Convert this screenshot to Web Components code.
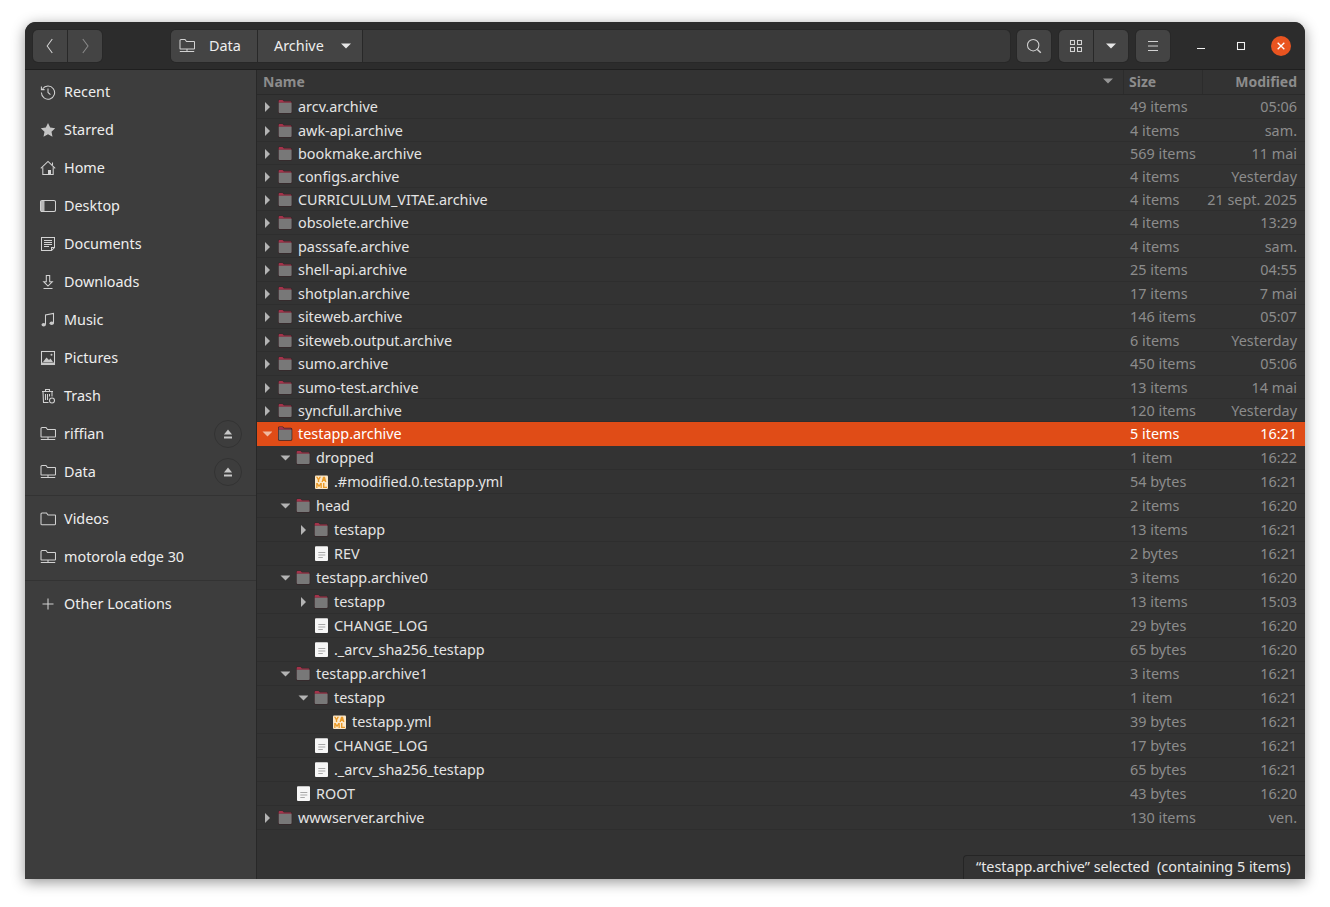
<!doctype html>
<html><head><meta charset="utf-8"><title>Archive</title>
<style>
html,body{margin:0;background:#fff;height:100%;overflow:hidden}
body{padding:22px 0 0 25px;box-sizing:border-box;font:14.4px "Noto Sans","Open Sans",sans-serif;color:#eee}
</style></head><body>
<fm-window>
  <fm-header slot="header"></fm-header>
  <fm-sidebar slot="side">
    <fm-place icon="recent">Recent</fm-place>
    <fm-place icon="star">Starred</fm-place>
    <fm-place icon="home">Home</fm-place>
    <fm-place icon="desktop">Desktop</fm-place>
    <fm-place icon="docs">Documents</fm-place>
    <fm-place icon="down">Downloads</fm-place>
    <fm-place icon="music">Music</fm-place>
    <fm-place icon="pics">Pictures</fm-place>
    <fm-place icon="trash">Trash</fm-place>
    <fm-place icon="drive" eject>riffian</fm-place>
    <fm-place icon="drive" eject>Data</fm-place>
    <fm-sep></fm-sep>
    <fm-place icon="fold">Videos</fm-place>
    <fm-place icon="drive">motorola edge 30</fm-place>
    <fm-sep></fm-sep>
    <fm-place icon="plus">Other Locations</fm-place>
  </fm-sidebar>
  <fm-list slot="main">
    <fm-row h="24" d="0" a="r" i="folder" s="49 items" m="05:06">arcv.archive</fm-row>
    <fm-row h="23" d="0" a="r" i="folder" s="4 items" m="sam.">awk-api.archive</fm-row>
    <fm-row h="23" d="0" a="r" i="folder" s="569 items" m="11 mai">bookmake.archive</fm-row>
    <fm-row h="23" d="0" a="r" i="folder" s="4 items" m="Yesterday">configs.archive</fm-row>
    <fm-row h="23" d="0" a="r" i="folder" s="4 items" m="21 sept. 2025">CURRICULUM_VITAE.archive</fm-row>
    <fm-row h="24" d="0" a="r" i="folder" s="4 items" m="13:29">obsolete.archive</fm-row>
    <fm-row h="23" d="0" a="r" i="folder" s="4 items" m="sam.">passsafe.archive</fm-row>
    <fm-row h="24" d="0" a="r" i="folder" s="25 items" m="04:55">shell-api.archive</fm-row>
    <fm-row h="23" d="0" a="r" i="folder" s="17 items" m="7 mai">shotplan.archive</fm-row>
    <fm-row h="24" d="0" a="r" i="folder" s="146 items" m="05:07">siteweb.archive</fm-row>
    <fm-row h="23" d="0" a="r" i="folder" s="6 items" m="Yesterday">siteweb.output.archive</fm-row>
    <fm-row h="24" d="0" a="r" i="folder" s="450 items" m="05:06">sumo.archive</fm-row>
    <fm-row h="23" d="0" a="r" i="folder" s="13 items" m="14 mai">sumo-test.archive</fm-row>
    <fm-row h="23" d="0" a="r" i="folder" s="120 items" m="Yesterday">syncfull.archive</fm-row>
    <fm-row d="0" a="d" i="folder" s="5 items" m="16:21" sel>testapp.archive</fm-row>
    <fm-row d="1" a="d" i="folder" s="1 item" m="16:22">dropped</fm-row>
    <fm-row d="2" i="yaml" s="54 bytes" m="16:21">.#modified.0.testapp.yml</fm-row>
    <fm-row d="1" a="d" i="folder" s="2 items" m="16:20">head</fm-row>
    <fm-row d="2" a="r" i="folder" s="13 items" m="16:21">testapp</fm-row>
    <fm-row d="2" i="file" s="2 bytes" m="16:21">REV</fm-row>
    <fm-row d="1" a="d" i="folder" s="3 items" m="16:20">testapp.archive0</fm-row>
    <fm-row d="2" a="r" i="folder" s="13 items" m="15:03">testapp</fm-row>
    <fm-row d="2" i="file" s="29 bytes" m="16:20">CHANGE_LOG</fm-row>
    <fm-row d="2" i="file" s="65 bytes" m="16:20">._arcv_sha256_testapp</fm-row>
    <fm-row d="1" a="d" i="folder" s="3 items" m="16:21">testapp.archive1</fm-row>
    <fm-row d="2" a="d" i="folder" s="1 item" m="16:21">testapp</fm-row>
    <fm-row d="3" i="yaml" s="39 bytes" m="16:21">testapp.yml</fm-row>
    <fm-row d="2" i="file" s="17 bytes" m="16:21">CHANGE_LOG</fm-row>
    <fm-row d="2" i="file" s="65 bytes" m="16:21">._arcv_sha256_testapp</fm-row>
    <fm-row d="1" i="file" s="43 bytes" m="16:20">ROOT</fm-row>
    <fm-row d="0" a="r" i="folder" s="130 items" m="ven.">wwwserver.archive</fm-row>
  </fm-list>
</fm-window>
<script>
const ICONS={
 recent:'<path d="M2.600 4.800A6.600 6.600 0 1 1 1.400 8.500" fill="none"/><path d="M8 4.500V8.400l2.400 2.200" fill="none"/><path d="M1.400 2.400v3.200h3.200" fill="none"/>',
 star:'<path d="M8 .9l2.200 4.700 5 .6-3.700 3.500 1 5L8 12.200l-4.500 2.500 1-5L.8 6.200l5-.6z" fill="#c4c4c4" stroke="none"/>',
 home:'<path d="M.8 8.400L8 1.400l7.200 7" fill="none"/><path d="M2.800 7.200v7.300h10.400V7.200" fill="none"/><path d="M8 10h3v4.500H8z" fill="#d4d4d4" stroke="none"/><path d="M12.500 2.500v2.500" fill="none"/>',
 desktop:'<rect x=".5" y="2.500" width="15" height="11" rx="1.500" fill="none"/><path d="M1 3h3.500v10H1z" fill="#b8b8b8" stroke="none"/>',
 docs:'<path d="M1.500 1.500h13v10l-3 3h-10z" fill="none"/><path d="M4 4.500h8M4 6.500h8M4 8.500h8M4 10.500h5" fill="none"/><path d="M11.500 14.500v-3h3" fill="none"/>',
 down:'<path d="M6.300 1.500h3.400v6.200h2.600L8 12 3.700 7.700h2.600z" fill="none"/><path d="M3.500 14.500h9" fill="none"/>',
 music:'<path d="M5.500 12.500V3l8-1.500V11" fill="none"/><ellipse cx="3.700" cy="12.800" rx="2.200" ry="1.800" fill="#c8c8c8" stroke="none"/><ellipse cx="11.700" cy="11.300" rx="2.200" ry="1.800" fill="#c8c8c8" stroke="none"/>',
 pics:'<rect x="1.500" y="1.500" width="13" height="13" fill="none"/><path d="M1 12.500h14V15H1z" fill="#c8c8c8" stroke="none"/><path d="M3 12l3.500-4.500L9 10l1.500-1.500L13 12z" fill="#c8c8c8" stroke="none"/><circle cx="11.500" cy="4.800" r="1" fill="#c8c8c8" stroke="none"/>',
 trash:'<path d="M2 3.500h11M5.500 3.500V1.500h4v2M3 3.500l.5 11h5M12 3.500v5M5.500 6v6M7.500 6v6M9.500 6v2.500" fill="none"/><circle cx="12" cy="12.500" r="2.500" fill="none"/>',
 drive:'<path d="M1 10.500v-8a1 1 0 0 1 1-1h4l1.500 2H15a.5.5 0 0 1 .5.5v6.500a.5.5 0 0 1-.5.5H1.500a.5.5 0 0 1-.5-.5z" fill="none"/><path d="M8 11v2M.8 13.500h14.400" fill="none"/>',
 fold:'<path d="M1 13V3a1 1 0 0 1 1-1h4.500L8 4h7a.5.5 0 0 1 .5.5V13a.7.7 0 0 1-.7.7H1.700A.7.7 0 0 1 1 13z" fill="none"/>',
 plus:'<path d="M8 2.500v11M2.500 8h11" fill="none"/>',
 search:'<circle cx="7.200" cy="7.200" r="5.700" fill="none"/><path d="M11.400 11.400l3.400 3.400" fill="none" stroke-width="1.400"/>',
 grid:'<rect x="2.500" y="2.500" width="4" height="4" fill="none"/><rect x="9.500" y="2.500" width="4" height="4" fill="none"/><rect x="2.500" y="9.500" width="4" height="4" fill="none"/><rect x="9.500" y="9.500" width="4" height="4" fill="none"/>',
 menu:'<path d="M3 3.500h10M3 8h10M3 12.500h10" fill="none"/>',
 tri:'<path d="M3 5.500h10L8 10.500z" fill="#e6e6e6" stroke="none"/>',
 eject:'<path d="M8 3.500l4 5H4z" fill="#c8c8c8" stroke="none"/><path d="M4 10.500h8v2H4z" fill="#c8c8c8" stroke="none"/>',
 back:'<path d="M10.300 1L5.200 8l5.100 7" fill="none"/>',
 fwd:'<path d="M5.800 1L11 8l-5.200 7" fill="none" stroke="#8a8a8a"/>',
 min:'<path d="M4 10.500h8" fill="none" stroke="#f2f2f2"/>',
 max:'<rect x="4.500" y="4.500" width="7" height="7" fill="none" stroke="#f2f2f2"/>',
 x:'<path d="M4.200 4.200l7.600 7.600M11.800 4.200l-7.600 7.600" fill="none" stroke="#fff" stroke-width="1.500"/>',
 folder:'<path d="M1 1.700A1.300 1.300 0 0 1 2.300.4h3.500l1.400 1.400h6.600A1.500 1.500 0 0 1 15.300 3.300v9.900a1.500 1.500 0 0 1-1.500 1.500H2.500A1.500 1.500 0 0 1 1 13.200z" fill="#37282b" stroke="none"/><path d="M1.700 1.900c0-.5.300-.8.800-.8h3l1.400 1.400h6.700c.4 0 .7.300.7.700V3.700H1.700z" fill="#a5324a" stroke="none"/><path d="M1.700 3.700h12.900v9.400c0 .5-.4.900-.9.900H2.600c-.5 0-.9-.4-.9-.9z" fill="#787878" stroke="none"/>',
 file:'<rect x="2" y=".3" width="13" height="14.700" rx="1" fill="#f6f6f6" stroke="none"/><path d="M5.300 6.500h7M5.300 9h7M5.300 11.500h4.500" stroke="#a8a8a8" fill="none"/>',
 yaml:'<rect x="2" y="1.500" width="13" height="13.500" rx="1" fill="#fbe7c8" stroke="none"/><path d="M3 2.800h1.600L5.500 4.600 6.400 2.800H8L6.200 6v2H4.800V6zM10 2.800h2l1.400 5.200h-1.500l-.2-1h-1.600l-.2 1H8.500zM3.200 9h1.500L6 11.200 7.300 9h1.500v5H7.500v-2.800L6 13.200 4.500 11.200V14H3.200zM10 9h1.400v3.800H14V14h-4z" fill="#ea9a28" stroke="none"/>'
};
customElements.define('fm-icon',class extends HTMLElement{
  static get observedAttributes(){return['n','s'];}
  constructor(){super();this.attachShadow({mode:'open'});}
  connectedCallback(){this.render();}
  attributeChangedCallback(){this.render();}
  render(){
    const s=this.getAttribute('s')||16;
    this.shadowRoot.innerHTML=`<style>:host{display:inline-flex;flex:none;line-height:0}svg{stroke:#d2d2d2;stroke-width:1.05}</style><svg width="${s}" height="${s}" viewBox="0 0 16 16">${ICONS[this.getAttribute('n')]||''}</svg>`;
  }
});
function mk(name,css,html,extra){
  customElements.define(name,class extends HTMLElement{
    constructor(){super();this.attachShadow({mode:'open'}).innerHTML='<style>'+css+'</style>'+html;}
    connectedCallback(){extra&&extra.call(this,this.shadowRoot);}
  });
}
mk('fm-window',`:host{display:grid;grid-template-columns:232px 1fr;grid-template-rows:48px 1fr;width:1280px;height:857px;border-radius:11px 11px 0 0;overflow:hidden;box-shadow:0 3px 14px rgba(0,0,0,.42);background:#333}
 ::slotted([slot=header]){grid-column:1/3}`,`<slot name="header"></slot><slot name="side"></slot><slot name="main"></slot>`);
mk('fm-header',`:host{display:flex;align-items:center;box-sizing:border-box;height:48px;background:#2c2c2c;border-bottom:1px solid #1f1f1f;padding:1px 0 0 8px;color:#eee}
 .group{display:flex;flex:none;height:32px;background:#444;box-shadow:0 0 0 1px #282828;border-radius:5px;box-sizing:border-box;overflow:hidden}
 .cell{display:flex;align-items:center;justify-content:center;border-right:1px solid #282828;box-sizing:border-box}
 .cell:last-child{border-right:0}
 .cell span{margin-top:-2px}
 .nav{width:69px;margin-right:69px}.nav .cell{width:35px}.nav .cell:last-child{flex:1}
 .path{width:839px;background:#3a3a3a;margin-right:7px}
 .path .cell{background:#444}
 .seg1{width:87px;gap:14px;padding-left:8px;justify-content:flex-start}
 .seg2{width:105px;gap:14px;padding-left:16px;justify-content:flex-start}
 .path .fill{flex:1;background:transparent;border:0}
 .sq{width:34px;margin-right:8px}
 .group.sq{border:0}
 .view{width:69px;margin-right:8px}.view .cell{width:35px}.view .cell:last-child{flex:1}
 .wc{display:flex;align-items:center;margin-left:3px}
 .wc div{width:40px;display:flex;justify-content:center;align-items:center}
 .close{width:20px;height:20px;border-radius:50%;background:#e95420;display:flex;align-items:center;justify-content:center}`,
 `<div class="group nav"><div class="cell"><fm-icon n="back"></fm-icon></div><div class="cell"><fm-icon n="fwd"></fm-icon></div></div>
  <div class="group path"><div class="cell seg1"><fm-icon n="drive"></fm-icon><span>Data</span></div><div class="cell seg2"><span>Archive</span><fm-icon n="tri"></fm-icon></div><div class="cell fill"></div></div>
  <div class="group sq cell"><fm-icon n="search"></fm-icon></div>
  <div class="group view"><div class="cell"><fm-icon n="grid"></fm-icon></div><div class="cell"><fm-icon n="tri"></fm-icon></div></div>
  <div class="group sq cell"><fm-icon n="menu"></fm-icon></div>
  <div class="wc"><div><fm-icon n="min"></fm-icon></div><div><fm-icon n="max"></fm-icon></div><div><span class="close"><fm-icon n="x" s="14"></fm-icon></span></div></div>`);
mk('fm-sidebar',`:host{display:block;background:#3d3d3d;border-right:1px solid #282828;padding-top:3px;box-sizing:border-box;min-height:0}`,`<slot></slot>`);
mk('fm-sep',`:host{display:block;height:1px;background:#333;margin:4px 0}`,``);
mk('fm-place',`:host{display:flex;align-items:center;height:38px;padding:0 14px 0 15px;gap:8px;color:#eee}
 .t{flex:1;white-space:nowrap;margin-top:-2px}
 .ej{width:28px;height:28px;border-radius:50%;border:1px solid #333;box-sizing:border-box;display:none;align-items:center;justify-content:center}
 :host([eject]) .ej{display:flex}`,
 `<fm-icon></fm-icon><span class="t"><slot></slot></span><span class="ej"><fm-icon n="eject"></fm-icon></span>`,function(r){
  r.querySelector('fm-icon').setAttribute('n',this.getAttribute('icon'));
 });
mk('fm-list',`:host{display:flex;flex-direction:column;position:relative;background:#333;min-height:0;min-width:0}
 .head{display:grid;grid-template-columns:1fr 79px 103px;height:25px;flex:none;border-bottom:1px solid #2a2a2a;box-sizing:border-box;font-weight:700;color:#8c8c8c;font-size:14px;align-items:stretch}
 .head div{display:flex;align-items:center;padding:0 6px 2px}
 .head .c{border-left:1px solid #2c2c2c}
 .head .c.sz{padding-left:5px}
 .head .name{justify-content:space-between;padding-right:7px}
 .head .m{justify-content:flex-end;padding-right:8px}
 .status{position:absolute;right:0;bottom:0;height:24px;width:342px;box-sizing:border-box;background:#333;border:1px solid #252525;border-width:1px 0 0 1px;border-radius:4px 0 0 0;display:flex;align-items:center;padding:0 0 2px 12px;color:#e8e8e8;white-space:nowrap}`,
 `<div class="head"><div class="name"><span>Name</span><fm-icon n="tri" style="opacity:.55"></fm-icon></div><div class="c sz">Size</div><div class="c m">Modified</div></div><slot></slot>
  <div class="status">“testapp.archive” selected&nbsp; (containing 5 items)</div>`);
mk('fm-row',`:host{display:grid;grid-template-columns:1fr 79px 103px;align-items:start;box-sizing:border-box;height:24px;padding-top:2px;line-height:20px;border-bottom:1px solid #2e2e2e;color:#e4e4e4;white-space:nowrap;overflow:hidden}
 :host([sel]){background:#e04c17;color:#fff;border-bottom-color:#e04c17}
 .n{display:flex;align-items:center;height:20px;min-width:0}
 .ar{width:18px;display:flex;justify-content:center;flex:none;box-sizing:border-box}
 .ic{margin:0 5px 0 1px}
 svg.t{display:block}
 .s{color:#8c8c8c;padding-left:7px}.m{color:#8c8c8c;text-align:right;padding-right:8px}
 :host([sel]) .s,:host([sel]) .m{color:#fff}`,
 `<div class="n"><span class="ar"></span><fm-icon class="ic"></fm-icon><span><slot></slot></span></div><div class="s"></div><div class="m"></div>`,function(r){
  const d=+this.getAttribute('d')||0,a=this.getAttribute('a');
  if(this.hasAttribute('h'))this.style.height=this.getAttribute('h')+'px';
  const ar=r.querySelector('.ar');ar.style.marginLeft=(d*18+1)+'px';
  const c=this.hasAttribute('sel')?'#f0b9a0':'#b4b4b4';
  if(a=='r')ar.innerHTML=`<svg class="t" width="10" height="10" viewBox="0 0 10 10"><path d="M3 0L8 5 3 10z" fill="${c}"/></svg>`;
  if(a=='d')ar.innerHTML=`<svg class="t" width="10" height="10" viewBox="0 0 10 10"><path d="M.5 2.500h10L5.500 7.500z" fill="${c}"/></svg>`;
  r.querySelector('.ic').setAttribute('n',this.getAttribute('i'));
  r.querySelector('.s').textContent=this.getAttribute('s');
  r.querySelector('.m').textContent=this.getAttribute('m');
 });
</script>
</body></html>
